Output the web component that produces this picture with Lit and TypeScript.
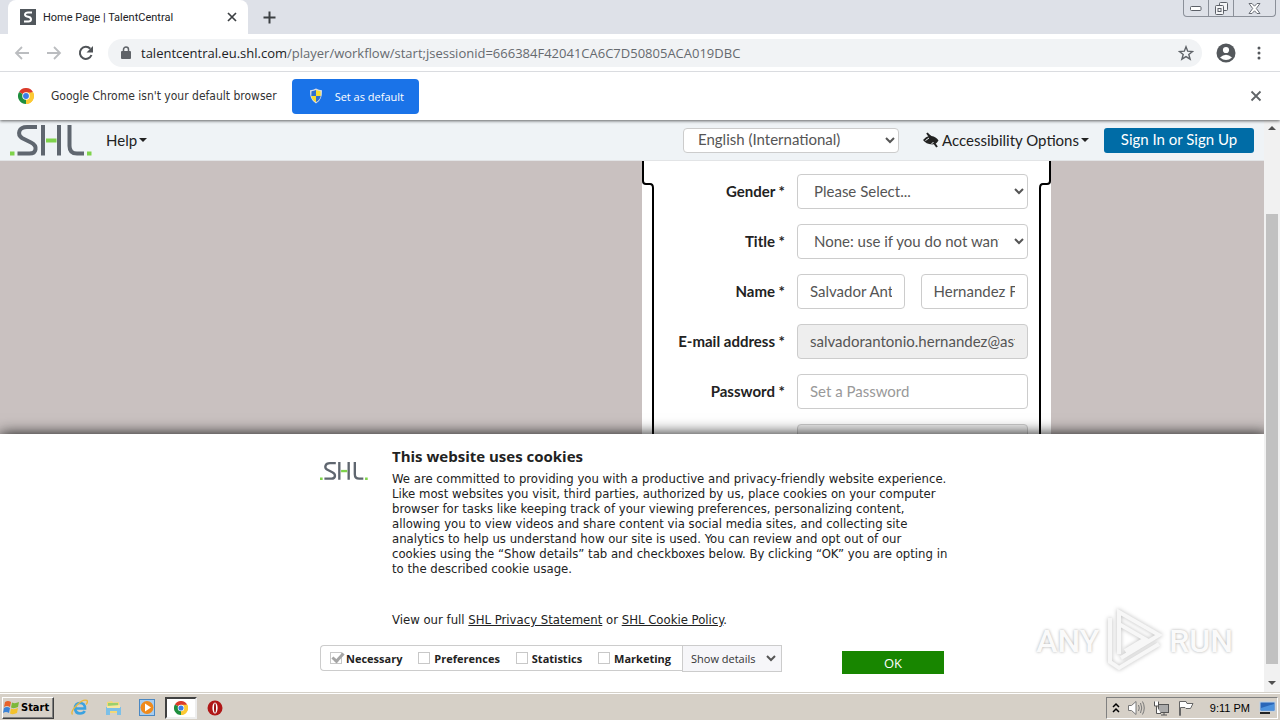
import { LitElement, html, css, svg } from "lit";
import { customElement, property } from "lit/decorators.js";

const chromeMark = svg`
  <circle cx="12" cy="12" r="12" fill="#fff"/>
  <path d="M12 12 1.6 6A12 12 0 0 1 22.4 6Z" fill="#db3b2b"/>
  <path d="M12 12 22.4 6A12 12 0 0 1 12 24Z" fill="#fcc934"/>
  <path d="M12 12 12 24A12 12 0 0 1 1.6 6Z" fill="#1e8e3e"/>
  <path d="M12 6.6H22.7A12 12 0 0 1 12 24L16.7 14.7Z" fill="#fcc934"/>
  <circle cx="12" cy="12" r="5.6" fill="#fff"/>
  <circle cx="12" cy="12" r="4.4" fill="#3b7de8"/>`;

@customElement("shl-logo")
class ShlLogo extends LitElement {
  @property({ type: Number }) width = 82;
  static styles = css`:host { display: block; line-height: 0; }`;
  render() {
    return html`<svg width=${this.width} viewBox="0 0 82 31" fill="none" stroke="#5f666f" stroke-width="4" role="img" aria-label="SHL">
      <path d="M27 2H17C8.500 2 7 9.500 12 13L21 17.500C28 21 26.500 28.500 19.500 28.500H7.500"/>
      <path d="M33 0V30.500M49 0V30.500M59.500 0V21Q59.500 28.500 67 28.500H74"/>
      <path d="M36 15.500H46.500" stroke="#7fd34b"/>
      <path d="M0 28.500H4.500M77 28.500H81.500" stroke="#7fd34b" stroke-width="4.200"/>
    </svg>`;
  }
}

@customElement("browser-chrome")
class BrowserChrome extends LitElement {
  static styles = css`
    :host { display: block; position: relative; z-index: 2; font-family: "Open Sans", sans-serif; color: #202124; box-shadow: 0 1px 3px rgba(0, 0, 0, .6); }
    * { box-sizing: border-box; }
    svg { display: block; flex: none; }
    button { border: 0; padding: 0; background: none; font: inherit; color: inherit; }
    .strip { display: flex; height: 34px; background: #dee1e8; padding-left: 8px; }
    .tab { display: flex; align-items: center; width: 240px; padding: 0 11px 0 12px; background: #fff; border-radius: 8px 8px 0 0; font: 11px Roboto, sans-serif; gap: 7px; }
    .tab span { flex: 1; }
    .plus { margin-left: 15px; }
    .controls { display: flex; margin: 0 4px 0 auto; height: 17px; border: 1px solid #8b9099; border-top: 0; border-radius: 0 0 4px 4px; }
    .controls button { width: 25px; display: grid; place-items: center; border-right: 1px solid #8b9099; }
    .controls button:last-child { width: 41px; border: 0; }
    .bar { display: flex; align-items: center; height: 38px; background: #fff; border-bottom: 1px solid #dadce0; padding: 0 15px 0 14px; }
    .nav { display: flex; gap: 16px; margin-right: 14px; }
    .omni { flex: 1; display: flex; align-items: center; height: 28px; border-radius: 14px; background: #f1f3f5; padding: 0 8px 0 12px; margin-right: 14px; font-size: 13px; gap: 9px; }
    .url { flex: 1; white-space: nowrap; overflow: hidden; color: #666a6f; }
    .url b { font-weight: 400; color: #202124; }
    .menu { margin-left: 15px; }
    .info { display: flex; align-items: center; height: 48px; background: #fff; padding: 0 18px; font: 12px "DejaVu Sans Condensed", sans-serif; color: #333; }
    .info p { margin: 0 15px 0 17px; }
    .default { display: flex; align-items: center; gap: 11px; height: 35px; width: 127px; padding-left: 16px; background: #1a73e8; color: #fff; border-radius: 4px; font: 11px "Open Sans", sans-serif; }
    .close { margin-left: auto; }
  `;
  render() {
    return html`
      <div class="strip">
        <div class="tab">
          <svg width="16" height="16" viewBox="0 0 16 16"><path fill="#51575c" d="M0 0h16v16H0z"/><path d="M12 3.500H8C4.500 3.500 4 7 7 7.500L9 8C12 9 11.500 12.500 8.500 12.500H4" fill="none" stroke="#fff" stroke-width="2"/></svg>
          <span>Home Page | TalentCentral</span>
          <button aria-label="Close tab"><svg width="10" height="10" viewBox="0 0 10 10"><path d="M1 1 9 9M9 1 1 9" stroke="#3c4043" stroke-width="1.700"/></svg></button>
        </div>
        <button class="plus" aria-label="New tab"><svg width="13" height="13" viewBox="0 0 13 13"><path d="M6.500 0.500V12.500M.5 6.500H12.500" stroke="#3c4043" stroke-width="2"/></svg></button>
        <div class="controls">
          <button aria-label="Minimize"><svg width="12" height="6" viewBox="0 0 12 6"><rect x=".5" y="1.500" width="10.500" height="4" rx="1" fill="#fff" stroke="#5c6068"/></svg></button>
          <button aria-label="Restore"><svg width="13" height="13" viewBox="0 0 13 13" fill="#f4f5f7" stroke="#5c6068"><rect x="4.500" y=".5" width="8" height="8" rx="1"/><rect x=".5" y="3.500" width="8" height="9" rx="1"/><rect x="3" y="6.500" width="3" height="3"/></svg></button>
          <button aria-label="Close"><svg width="13" height="11" viewBox="0 0 13 11"><path d="M1 .5H4L6.500 3.200 9 .5H12L8.300 5.500 12 10.500H9L6.500 7.800 4 10.500H1L4.700 5.500Z" fill="#fff" stroke="#6a6e76"/></svg></button>
        </div>
      </div>
      <div class="bar">
        <div class="nav">
          <button aria-label="Back"><svg width="16" height="16" viewBox="0 0 16 16" fill="none" stroke="#bbbdc0" stroke-width="1.800"><path d="M15 8H2.500M8 2 2 8 8 14"/></svg></button>
          <button aria-label="Forward"><svg width="16" height="16" viewBox="0 0 16 16" fill="none" stroke="#bbbdc0" stroke-width="1.800"><path d="M1 8H13.500M8 2 14 8 8 14"/></svg></button>
          <button aria-label="Reload"><svg width="16" height="16" viewBox="0 0 16 16"><path d="M13.500 10A6 6 0 1 1 12.300 3.800" fill="none" stroke="#505458" stroke-width="2"/><path d="M15 1V7.500H8.500Z" fill="#505458"/></svg></button>
        </div>
        <div class="omni">
          <svg width="12" height="14" viewBox="0 0 12 14"><rect x="1" y="5" width="10" height="8" rx="1" fill="#5f6368"/><path d="M3.500 5.500V3.500a2.500 2.500 0 0 1 5 0V5.500" fill="none" stroke="#5f6368" stroke-width="1.500"/></svg>
          <div class="url"><b>talentcentral.eu.shl.com</b>/player/workflow/start;jsessionid=666384F42041CA6C7D50805ACA019DBC</div>
          <button aria-label="Bookmark this page"><svg width="16" height="16" viewBox="0 0 16 16"><path d="M8 1.800 9.700 6.200 14.500 6.500 10.800 9.500 12.100 14.200 8 11.600 3.900 14.200 5.200 9.500 1.500 6.500 6.300 6.200Z" fill="none" stroke="#5f6368" stroke-width="1.400"/></svg></button>
        </div>
        <button aria-label="Profile"><svg width="20" height="20" viewBox="0 0 20 20"><circle cx="10" cy="10" r="9.500" fill="#54585c"/><circle cx="10" cy="7" r="3.100" fill="#fff"/><path d="M4 14.500Q10 9 16 14.500 10 19.500 4 14.500Z" fill="#fff"/></svg></button>
        <button class="menu" aria-label="Menu"><svg width="14" height="16" viewBox="0 0 14 16" fill="#54585c"><circle cx="8" cy="3" r="1.500"/><circle cx="8" cy="8" r="1.500"/><circle cx="8" cy="13" r="1.500"/></svg></button>
      </div>
      <div class="info">
        <svg width="16" height="16" viewBox="0 0 24 24">${chromeMark}</svg>
        <p>Google Chrome isn't your default browser</p>
        <button class="default"><svg width="16" height="16" viewBox="0 0 16 16"><path d="M8 .5Q11 2 14 2.200 14.500 12 8 15.500 1.500 12 2 2.200 5 2 8 .5Z" fill="#d9dde3"/><path d="M8 2Q6 3 3.500 3.300L3.300 8H8Z" fill="#2e6fd0"/><path d="M8 2Q10 3 12.500 3.300L12.700 8H8Z" fill="#f7dc2e"/><path d="M8 14Q4 12 3.300 8H8Z" fill="#f7dc2e"/><path d="M8 14Q12 12 12.700 8H8Z" fill="#2e6fd0"/></svg>Set as default</button>
        <button class="close" aria-label="Dismiss"><svg width="12" height="12" viewBox="0 0 12 12"><path d="M1.500 1.500 10.500 10.500M10.500 1.500 1.500 10.500" stroke="#606468" stroke-width="1.800"/></svg></button>
      </div>`;
  }
}

@customElement("site-page")
class SitePage extends LitElement {
  static styles = css`
    :host { display: flex; flex-direction: column; min-width: 0; min-height: 0; overflow: hidden; font: 15px Lato, sans-serif; color: #222; background: #c9c1c0; }
    * { box-sizing: border-box; }
    svg { display: block; flex: none; }
    a { color: inherit; }
    button { border: 0; font: inherit; }
    input, select { font: inherit; color: #555; background: #fff; border: 1px solid #ccc; border-radius: 4px; margin: 0; }
    header { display: flex; align-items: center; flex: none; height: 41px; background: #eff3f6; padding: 0 10px; border-bottom: 1px solid #e2e4e6; }
    .drop { display: flex; align-items: center; gap: 2px; text-decoration: none; padding-bottom: 1px; }
    .drop::after { content: ""; border: 4px solid transparent; border-top-color: #222; border-bottom: 0; }
    .help { margin-left: 14px; }
    .lang { width: 216px; height: 25px; padding: 0 10px 2px; margin-left: auto; }
    .access { margin-left: 24px; }
    .access svg { margin-right: 1px; }
    .sign { width: 150px; height: 25px; margin-left: 15px; padding: 0 0 2px; background: #006ca6; color: #fff; border-radius: 3px; }
    main { flex: 1; min-height: 0; overflow: hidden; display: flex; justify-content: flex-end; padding-right: 213px; }
    .card { display: flex; width: 409px; height: 400px; background: #fff; }
    .side { display: flex; flex-direction: column; width: 12px; }
    .side::after { content: ""; flex: 1; border-right: 2px solid #000; }
    .right.side::after { border-right: 0; border-left: 2px solid #000; }
    form { flex: 1; min-width: 0; display: grid; grid-template-columns: 131px 1fr; align-content: start; align-items: center; gap: 15px 12px; padding: 13px 11px 0 0; }
    form label { text-align: right; font-weight: 700; padding-bottom: 2px; }
    form input, form select { width: 100%; min-width: 0; height: 35px; padding: 5px 12px 7px; }
    form input:disabled { background: #eee; }
    input::placeholder { color: #999; }
    .pair { display: flex; gap: 16px; }
    .cookies { position: relative; z-index: 1; flex: none; background: #fff; box-shadow: #121212 2px 2px 14px 2px; font: 13px/15px "DejaVu Sans Condensed", sans-serif; padding: 12px 0 20px; }
    .inner { width: 624px; margin: 0 auto; }
    .copy { display: grid; grid-template-columns: 72px 1fr; white-space: nowrap; }
    .copy shl-logo { margin-top: 16px; }
    h2 { margin: 0 0 5px; font: 700 15px/20px "Open Sans", sans-serif; }
    p { margin: 0 0 36px; }
    .links { margin-bottom: 18px; }
    .choices { display: flex; align-items: start; height: 27px; font: 11px "Open Sans", sans-serif; }
    .opts { width: 362px; height: 26px; display: flex; justify-content: space-between; align-items: center; border: 1px solid #ccc; border-right: 0; border-radius: 4px 0 0 4px; padding: 0 11px 0 9px; font-weight: 700; }
    .opts label { display: flex; align-items: center; gap: 4px; }
    .opts input { appearance: none; width: 12px; height: 12px; border: 1px solid #c8c8c8; border-radius: 0; display: grid; place-items: center; }
    .opts input:checked::before { content: ""; width: 9px; height: 4px; border: solid #a5a5a5; border-width: 0 0 3px 3px; transform: translate(1px, -2px) rotate(-48deg); }
    .details { width: 100px; height: 27px; display: flex; align-items: center; justify-content: space-between; background: #f6f6f9; border: 1px solid #ccc; padding: 0 5px 0 8px; color: #333; }
    .ok { width: 102px; height: 23px; margin: 6px 0 0 auto; padding: 0; background: #188600; color: #fff; font-size: 13px; }
  `;
  private side(right: boolean) {
    return html`<div class="side ${right ? "right" : ""}"><svg width="12" height="27" viewBox="0 0 12 27" fill="none" stroke="#000" stroke-width="2">
      <path d=${right ? "M11 0V20Q11 23 8 23H4Q1 23 1 27" : "M1 0V20Q1 23 4 23H8Q11 23 11 27"} /></svg></div>`;
  }
  render() {
    return html`
      <header>
        <shl-logo></shl-logo>
        <a class="drop help" href="#">Help</a>
        <select class="lang" aria-label="Language"><option>English (International)</option></select>
        <a class="drop access" href="#"><svg width="16" height="16" viewBox="0 0 16 16" fill="none"><path d="M0 8Q3 4.500 6 4L5 1.500 8.500 4Q13 4.500 15.500 8.500 14 11 12 12L9 12.500Q3 12 0 8Z" fill="#222"/><path d="M4 1 14 15" stroke="#222" stroke-width="2"/><path d="M2.500 8.500 6 6M8 12.500 10.500 10" stroke="#eff3f6"/></svg>Accessibility Options</a>
        <button class="sign">Sign In or Sign Up</button>
      </header>
      <main>
        <div class="card">
          ${this.side(false)}
          <form>
            <label for="gender">Gender *</label><select id="gender"><option>Please Select...</option></select>
            <label for="title">Title *</label><select id="title"><option>None: use if you do not want a title</option></select>
            <label for="first">Name *</label><div class="pair"><input id="first" value="Salvador Antonio"><input aria-label="Last name" value="Hernandez Flores"></div>
            <label for="mail">E-mail address *</label><input id="mail" disabled value="salvadorantonio.hernandez@astaldi.com">
            <label for="pass">Password *</label><input id="pass" placeholder="Set a Password">
            <span></span><input aria-label="Confirm password" disabled>
          </form>
          ${this.side(true)}
        </div>
      </main>
      <section class="cookies">
        <div class="inner">
          <div class="copy">
            <shl-logo width="48"></shl-logo>
            <div>
              <h2>This website uses cookies</h2>
              <p>We are committed to providing you with a productive and privacy-friendly website experience.<br>Like most websites you visit, third parties, authorized by us, place cookies on your computer<br>browser for tasks like keeping track of your viewing preferences, personalizing content,<br>allowing you to view videos and share content via social media sites, and collecting site<br>analytics to help us understand how our site is used. You can review and opt out of our<br>cookies using the “Show details” tab and checkboxes below. By clicking “OK” you are opting in<br>to the described cookie usage.</p>
              <p class="links">View our full <a href="#">SHL Privacy Statement</a> or <a href="#">SHL Cookie Policy</a>.</p>
            </div>
          </div>
          <div class="choices">
            <div class="opts">
              <label><input type="checkbox" checked disabled>Necessary</label>
              <label><input type="checkbox">Preferences</label>
              <label><input type="checkbox">Statistics</label>
              <label><input type="checkbox">Marketing</label>
            </div>
            <button class="details">Show details<svg width="10" height="7" viewBox="0 0 10 7"><path d="M1 1 5 5 9 1" fill="none" stroke="#555" stroke-width="2"/></svg></button>
            <button class="ok">OK</button>
          </div>
        </div>
      </section>`;
  }
}

@customElement("task-bar")
class TaskBar extends LitElement {
  static styles = css`
    :host { display: flex; align-items: center; justify-content: space-between; height: 28px; box-sizing: border-box; border-top: 1px solid #d4d0c8; box-shadow: inset 0 1px #fff; background: #d6d0c7; padding: 2px 2px 0; font: 11px "Liberation Sans", sans-serif; color: #000; }
    * { box-sizing: border-box; }
    svg { display: block; flex: none; }
    button { border: 0; padding: 0; background: none; font: inherit; }
    .apps { display: flex; align-items: center; gap: 17px; }
    .start { display: flex; align-items: center; gap: 1px; width: 52px; height: 22px; border: 1px solid; border-color: #fff #404040 #404040 #fff; box-shadow: inset -1px -1px #808080; font: 700 11px "DejaVu Sans Condensed", sans-serif; }
    .active { width: 32px; height: 22px; margin: 0 -8px; display: grid; place-items: center; background: #fff; border: 2px solid; border-color: #404040 #eee #eee #404040; }
    .tray { display: flex; align-items: center; gap: 8px; height: 22px; border: 1px solid; border-color: #808080 #fff #fff #808080; padding: 0 1px 0 5px; }
    .tray time { margin-left: 8px; }
  `;
  render() {
    return html`
      <div class="apps">
        <button class="start"><svg width="17" height="17" viewBox="0 0 17 17"><path d="M2 3Q5 1 8 3L7 8Q4 6 1 8Z" fill="#e8622a"/><path d="M9 3.500Q12 5 16 3L15 8Q11 10 8 8.500Z" fill="#7cb83a"/><path d="M1 9Q4 7 7 9L6 14Q3 12 0 14Z" fill="#3b82d6"/><path d="M8 9.500Q11 11 15 9L14 14Q10 16 7 14.500Z" fill="#f4c22c"/></svg>Start</button>
        <button aria-label="Internet Explorer"><svg width="17" height="17" viewBox="0 0 17 17" fill="none"><path d="M4 9.500H14Q14 4 9 4 4 4 4 9.500 4.500 14.500 9 14.500 12.500 14.500 13.700 12" stroke="#3ba2e0" stroke-width="2.600"/><path d="M1.500 15.500C-1.500 12 11-1 16 1.500 17 3 15.500 5 15 5.500" stroke="#e9b83c" stroke-width="1.400"/></svg></button>
        <button aria-label="File Explorer"><svg width="17" height="17" viewBox="0 0 17 17"><path d="M2 3 7 2 8 3.500 14 3V14H2Z" fill="#f3d877"/><path d="M3 4h10v4H3z" fill="#9ad06c"/><path d="M1 8H16V16H12V12H5V16H1Z" fill="#7cc0e8"/><path d="M2 7 15 6V9H2Z" fill="#f8e7a0"/></svg></button>
        <button aria-label="Media Player"><svg width="17" height="17" viewBox="0 0 17 17"><rect x=".5" y=".5" width="15" height="16" fill="#a7cdf0" stroke="#4b88c2"/><circle cx="8" cy="8.500" r="6.500" fill="#ef8a1c"/><path d="M6 4.500 12 8.500 6 12.500Z" fill="#fff"/></svg></button>
        <button class="active" aria-label="Google Chrome"><svg width="14" height="14" viewBox="0 0 24 24">${chromeMark}</svg></button>
        <button aria-label="Opera"><svg width="18" height="16" viewBox="-1 0 18 16"><circle cx="8" cy="8" r="7.500" fill="#b01717"/><ellipse cx="8" cy="8" rx="2.600" ry="5.500" fill="#fff"/><ellipse cx="8" cy="8" rx="1" ry="4.700" fill="#9a1212"/></svg></button>
      </div>
      <div class="tray">
        <svg width="8" height="12" viewBox="0 0 8 12" fill="none" stroke="#000" stroke-width="1.500"><path d="M1 5 4 2 7 5M1 10 4 7 7 10"/></svg>
        <svg width="17" height="16" viewBox="0 0 17 16" fill="none" stroke="#777"><path d="M.5 5.500H3.500L8 1.500V14.500L3.500 10.500H.5Z" fill="#fff"/><path d="M10.500 5Q12 8 10.500 11M12.500 3Q15 8 12.500 13M14.500 1.500Q18 8 14.500 14.500"/></svg>
        <svg width="17" height="16" viewBox="0 0 17 16" fill="#fff" stroke="#555"><rect x="5.500" y="4.500" width="10" height="8" fill="#aaa"/><path d="M8 15H14M11 12.500V15M1.500 1.500V6H5.500V1.500M3.500 6V13.500H8"/></svg>
        <svg width="16" height="16" viewBox="0 0 16 16" fill="#fff" stroke="#666"><path d="M1.500 15.500V1.500H8L9 3.500H15L12.500 8.500H8L7 7.500H2.500V15.500Z"/></svg>
        <time>9:11 PM</time>
        <svg width="18" height="16" viewBox="0 0 18 16"><rect x="2" y="2" width="15" height="9" fill="#2a66b8" stroke="#bcd2ea"/><path d="M3 8 16 4V10.500H3Z" fill="#4d92dd"/><path d="M2 13H12" stroke="#222" stroke-width="2"/></svg>
      </div>`;
  }
}

@customElement("app-root")
class AppRoot extends LitElement {
  static styles = css`
    :host { display: flex; flex-direction: column; height: 100vh; overflow: hidden; position: relative; }
    .view { flex: 1; min-height: 0; display: grid; grid-template-columns: minmax(0, 1fr) 16px; }
    .scroll { display: flex; flex-direction: column; align-items: center; background: #f1f1f1; padding: 6px 0 7px; box-sizing: border-box; }
    .scroll::before { content: ""; border: 4px solid transparent; border-bottom-color: #505050; border-top: 0; }
    .scroll::after { content: ""; border: 4px solid transparent; border-top-color: #505050; border-bottom: 0; }
    .track { flex: 1; width: 12px; display: grid; grid-template-rows: 84fr 450fr 17fr; }
    .thumb { grid-row: 2; background: #c1c1c1; }
    .mark { position: absolute; right: 47px; bottom: 46px; display: flex; align-items: center; gap: 6px; z-index: 3; pointer-events: none; font: 500 32px Roboto, sans-serif; color: #fafafa; text-shadow: 0 0 3px #aaa; }
    .mark svg { display: block; filter: drop-shadow(0 0 2px #bbb); }
  `;
  render() {
    return html`
      <browser-chrome></browser-chrome>
      <div class="view"><site-page></site-page><div class="scroll"><div class="track"><div class="thumb"></div></div></div></div>
      <task-bar></task-bar>
      <div class="mark"><span>ANY</span><svg width="58" height="66" viewBox="0 0 58 66" fill="none" stroke="#f7f7f7" stroke-width="4"><path d="M14 46V4L54 27 16 50M14 16 40 31 20 43M5 10V54L14 60 54 36"/></svg><span>RUN</span></div>`;
  }
}
